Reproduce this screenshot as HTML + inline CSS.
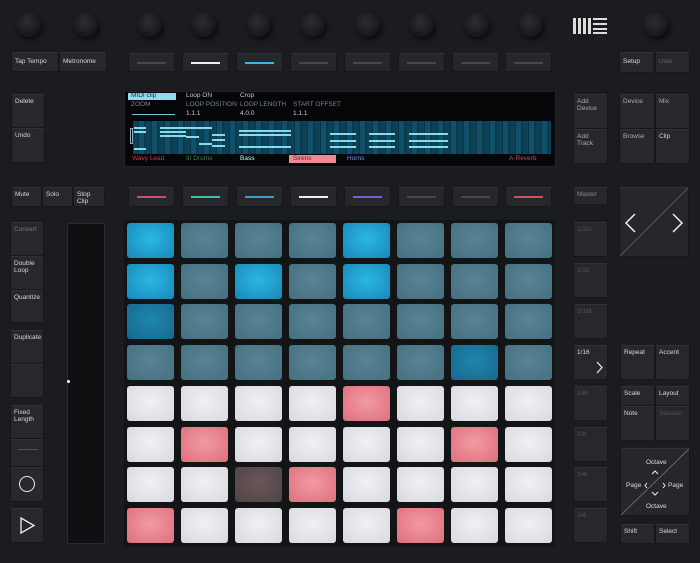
<!DOCTYPE html>
<html><head><meta charset="utf-8"><style>
*{margin:0;padding:0;box-sizing:border-box}
body{width:700px;height:563px;background:#1b1c1f;overflow:hidden;position:relative;font-family:"Liberation Sans",sans-serif}
.a{position:absolute}
.k{position:absolute;width:25px;height:25px;border-radius:50%;background:radial-gradient(circle at 45% 40%,#2c2e31,#161719 70%);box-shadow:2px 3px 4px #0c0c0d}
.b{position:absolute;background:#26282b;border:1px solid #16171a;border-top-color:#303236;border-radius:2px;color:#d8d8d8;font-size:6.5px;padding:3px 3px;line-height:7px}
.t{position:absolute;background:#25272a;border:1px solid #161719;border-top-color:#303236;border-radius:2px}
.t i{position:absolute;left:8px;right:8px;top:50%;height:2px;background:#44474b;margin-top:-1px}
.p{position:absolute;width:47px;height:35px;border-radius:3px}
.S{background:radial-gradient(ellipse at 50% 45%,#5a8395,#44707f)}
.B{background:radial-gradient(ellipse at 50% 45%,#2bb6e4,#1889b8)}
.M{background:radial-gradient(ellipse at 50% 45%,#1f85ad,#17698c)}
.W{background:radial-gradient(ellipse at 50% 45%,#f1f1f4,#d8d8de)}
.P{background:radial-gradient(ellipse at 50% 45%,#f19aa3,#df6f7c)}
.D{background:radial-gradient(ellipse at 50% 45%,#6e5558,#4b4547)}
.n{position:absolute;height:2px;background:#86dcec}
.dt{position:absolute;font-size:6.5px;color:#c5cfd3}
.dim{color:#666}
</style></head><body>
<div class="k" style="left:16px;top:12px"></div>
<div class="k" style="left:73px;top:12px"></div>
<div class="k" style="left:137px;top:12px"></div>
<div class="k" style="left:191px;top:12px"></div>
<div class="k" style="left:246px;top:12px"></div>
<div class="k" style="left:300px;top:12px"></div>
<div class="k" style="left:355px;top:12px"></div>
<div class="k" style="left:409px;top:12px"></div>
<div class="k" style="left:464px;top:12px"></div>
<div class="k" style="left:518px;top:12px"></div>
<div class="k" style="left:643px;top:12px"></div>
<div class="a" style="left:573px;top:18px;width:3px;height:16px;background:#ddd"></div>
<div class="a" style="left:578px;top:18px;width:3px;height:16px;background:#ddd"></div>
<div class="a" style="left:583px;top:18px;width:3px;height:16px;background:#ddd"></div>
<div class="a" style="left:588px;top:18px;width:3px;height:16px;background:#ddd"></div>
<div class="a" style="left:593px;top:18px;width:14px;height:2px;background:#ddd;box-shadow:0 5px 0 #ddd,0 10px 0 #ddd,0 14px 0 #ddd"></div>
<div class="b" style="left:11px;top:52px;width:48px;height:20px;padding-top:5px">Tap Tempo</div>
<div class="b" style="left:59px;top:52px;width:48px;height:20px;padding-top:5px">Metronome</div>
<div class="t" style="left:128px;top:53px;width:47px;height:19px"><i></i></div>
<div class="t" style="left:182px;top:53px;width:47px;height:19px"><i style="background:#eee"></i></div>
<div class="t" style="left:236px;top:53px;width:47px;height:19px"><i style="background:#3ab8dd"></i></div>
<div class="t" style="left:290px;top:53px;width:47px;height:19px"><i></i></div>
<div class="t" style="left:344px;top:53px;width:47px;height:19px"><i></i></div>
<div class="t" style="left:398px;top:53px;width:47px;height:19px"><i></i></div>
<div class="t" style="left:452px;top:53px;width:47px;height:19px"><i></i></div>
<div class="t" style="left:505px;top:53px;width:47px;height:19px"><i></i></div>
<div class="b" style="left:619px;top:52px;width:35px;height:21px;padding-top:5px">Setup</div>
<div class="b dim" style="left:655px;top:52px;width:35px;height:21px;padding-top:5px">User</div>
<div class="b" style="left:11px;top:94px;width:34px;height:34px">Delete</div>
<div class="b" style="left:11px;top:128px;width:34px;height:35px">Undo</div>
<div class="a" style="left:124px;top:91px;width:432px;height:76px;background:#050607;border:1px solid #222"></div>
<div class="a" style="left:128px;top:93px;width:48px;height:7px;background:#8fdcec"></div>
<div class="dt" style="left:131px;top:92px;color:#133">MIDI clip</div>
<div class="dt" style="left:186px;top:92px">Loop ON</div>
<div class="dt" style="left:240px;top:92px">Crop</div>
<div class="dt" style="left:131px;top:101px;color:#7a8489">ZOOM</div>
<div class="dt" style="left:186px;top:101px;color:#7a8489">LOOP POSITION</div>
<div class="dt" style="left:240px;top:101px;color:#7a8489">LOOP LENGTH</div>
<div class="dt" style="left:293px;top:101px;color:#7a8489">START OFFSET</div>
<div class="a" style="left:132px;top:114px;width:43px;height:1px;background:#6ac8de"></div>
<div class="dt" style="left:186px;top:110px">1.1.1</div>
<div class="dt" style="left:240px;top:110px">4.0.0</div>
<div class="dt" style="left:293px;top:110px">1.1.1</div>
<div class="a" style="left:133px;top:121px;width:418px;height:33px;background:repeating-linear-gradient(90deg,#0d4256 0 5px,#0a3548 5px 6px,#10506a 6px 11px,#0b3a4c 11px 13px)"></div>
<div class="a" style="left:130px;top:128px;width:3px;height:16px;border:1px solid #9ab"></div>
<div class="n" style="left:134px;top:127px;width:12px"></div><div class="n" style="left:134px;top:131px;width:12px"></div><div class="n" style="left:134px;top:148px;width:12px"></div>
<div class="n" style="left:160px;top:127px;width:52px"></div><div class="n" style="left:160px;top:131px;width:26px"></div><div class="n" style="left:160px;top:135px;width:26px"></div>
<div class="n" style="left:186px;top:136px;width:13px"></div><div class="n" style="left:199px;top:143px;width:13px"></div>
<div class="n" style="left:212px;top:134px;width:13px"></div><div class="n" style="left:212px;top:139px;width:13px"></div><div class="n" style="left:212px;top:145px;width:13px"></div>
<div class="n" style="left:239px;top:130px;width:52px"></div><div class="n" style="left:239px;top:134px;width:52px"></div><div class="n" style="left:239px;top:146px;width:52px"></div>
<div class="n" style="left:330px;top:133px;width:26px"></div><div class="n" style="left:330px;top:140px;width:26px"></div><div class="n" style="left:330px;top:146px;width:26px"></div>
<div class="n" style="left:369px;top:133px;width:26px"></div><div class="n" style="left:369px;top:140px;width:26px"></div><div class="n" style="left:369px;top:146px;width:26px"></div>
<div class="n" style="left:409px;top:133px;width:39px"></div><div class="n" style="left:409px;top:140px;width:39px"></div><div class="n" style="left:409px;top:146px;width:39px"></div>
<div class="dt" style="left:132px;top:155px;color:#d0344f">Wavy Lead</div>
<div class="dt" style="left:186px;top:155px;color:#4e7a4e">III Drums</div>
<div class="dt" style="left:240px;top:155px;color:#cfe">Bass</div>
<div class="a" style="left:289px;top:155px;width:47px;height:8px;background:#e88b92"></div>
<div class="dt" style="left:293px;top:155px;color:#622">Sirens</div>
<div class="dt" style="left:347px;top:155px;color:#8c8cf0">Horns</div>
<div class="dt" style="left:509px;top:155px;color:#b05060">A-Reverb</div>
<div class="b dim" style="left:573px;top:94px;width:35px;height:35px;color:#aaa">Add Device</div>
<div class="b" style="left:573px;top:129px;width:35px;height:35px;color:#aaa">Add Track</div>
<div class="b" style="left:619px;top:94px;width:36px;height:35px;color:#aaa">Device</div>
<div class="b" style="left:655px;top:94px;width:35px;height:35px;color:#aaa">Mix</div>
<div class="b" style="left:619px;top:129px;width:36px;height:35px;color:#aaa">Browse</div>
<div class="b" style="left:655px;top:129px;width:35px;height:35px">Clip</div>
<div class="b" style="left:11px;top:187px;width:31px;height:20px">Mute</div>
<div class="b" style="left:42px;top:187px;width:31px;height:20px">Solo</div>
<div class="b" style="left:73px;top:187px;width:32px;height:20px">Stop Clip</div>
<div class="t" style="left:128px;top:187px;width:47px;height:20px"><i style="background:#d04a78"></i></div>
<div class="t" style="left:182px;top:187px;width:47px;height:20px"><i style="background:#3ac0b0"></i></div>
<div class="t" style="left:236px;top:187px;width:47px;height:20px"><i style="background:#3aa0d0"></i></div>
<div class="t" style="left:290px;top:187px;width:47px;height:20px"><i style="background:#eee"></i></div>
<div class="t" style="left:344px;top:187px;width:47px;height:20px"><i style="background:#7a5ae0"></i></div>
<div class="t" style="left:398px;top:187px;width:47px;height:20px"><i></i></div>
<div class="t" style="left:452px;top:187px;width:47px;height:20px"><i></i></div>
<div class="t" style="left:505px;top:187px;width:47px;height:20px"><i style="background:#d05060"></i></div>
<div class="b dim" style="left:573px;top:187px;width:35px;height:18px;color:#888">Master</div>
<div class="t" style="left:619px;top:187px;width:70px;height:70px"></div>
<svg class="a" style="left:619px;top:187px" width="70" height="70"><path d="M69 1L1 69" stroke="#555" stroke-width="1"/><path d="M16 27L7 36L16 45M54 27L63 36L54 45" stroke="#eee" stroke-width="1.5" fill="none"/></svg>
<div class="b dim" style="left:10px;top:222px;width:34px;height:34px;color:#777">Convert</div>
<div class="b" style="left:10px;top:256px;width:34px;height:34px">Double Loop</div>
<div class="b" style="left:10px;top:290px;width:34px;height:33px">Quantize</div>
<div class="b" style="left:10px;top:330px;width:34px;height:34px">Duplicate</div>
<div class="b" style="left:10px;top:364px;width:34px;height:34px"></div>
<div class="b" style="left:10px;top:405px;width:34px;height:34px">Fixed Length</div>
<div class="b" style="left:10px;top:439px;width:34px;height:28px"><div style="width:20px;height:1px;background:#a03040;margin:6px 4px"></div></div>
<div class="b" style="left:10px;top:467px;width:34px;height:35px"></div>
<div class="a" style="left:19px;top:476px;width:16px;height:16px;border:1.5px solid #eee;border-radius:50%"></div>
<div class="b" style="left:10px;top:508px;width:34px;height:35px"></div>
<svg class="a" style="left:10px;top:508px" width="34" height="35"><path d="M11 10L24 17.5L11 25Z" stroke="#eee" stroke-width="1.3" fill="none"/></svg>
<div class="a" style="left:67px;top:223px;width:38px;height:321px;background:#0f1011;border:1px solid #2a2b2e;border-radius:2px"></div>
<div class="a" style="left:67px;top:380px;width:3px;height:3px;border-radius:50%;background:#fff"></div>
<div class="a" style="left:124px;top:220px;width:431px;height:326px;background:#131416"></div>
<div class="p B" style="left:127px;top:223px"></div><div class="p S" style="left:181px;top:223px"></div><div class="p S" style="left:235px;top:223px"></div><div class="p S" style="left:289px;top:223px"></div><div class="p B" style="left:343px;top:223px"></div><div class="p S" style="left:397px;top:223px"></div><div class="p S" style="left:451px;top:223px"></div><div class="p S" style="left:505px;top:223px"></div>
<div class="p B" style="left:127px;top:264px"></div><div class="p S" style="left:181px;top:264px"></div><div class="p B" style="left:235px;top:264px"></div><div class="p S" style="left:289px;top:264px"></div><div class="p B" style="left:343px;top:264px"></div><div class="p S" style="left:397px;top:264px"></div><div class="p S" style="left:451px;top:264px"></div><div class="p S" style="left:505px;top:264px"></div>
<div class="p M" style="left:127px;top:304px"></div><div class="p S" style="left:181px;top:304px"></div><div class="p S" style="left:235px;top:304px"></div><div class="p S" style="left:289px;top:304px"></div><div class="p S" style="left:343px;top:304px"></div><div class="p S" style="left:397px;top:304px"></div><div class="p S" style="left:451px;top:304px"></div><div class="p S" style="left:505px;top:304px"></div>
<div class="p S" style="left:127px;top:345px"></div><div class="p S" style="left:181px;top:345px"></div><div class="p S" style="left:235px;top:345px"></div><div class="p S" style="left:289px;top:345px"></div><div class="p S" style="left:343px;top:345px"></div><div class="p S" style="left:397px;top:345px"></div><div class="p M" style="left:451px;top:345px"></div><div class="p S" style="left:505px;top:345px"></div>
<div class="p W" style="left:127px;top:386px"></div><div class="p W" style="left:181px;top:386px"></div><div class="p W" style="left:235px;top:386px"></div><div class="p W" style="left:289px;top:386px"></div><div class="p P" style="left:343px;top:386px"></div><div class="p W" style="left:397px;top:386px"></div><div class="p W" style="left:451px;top:386px"></div><div class="p W" style="left:505px;top:386px"></div>
<div class="p W" style="left:127px;top:427px"></div><div class="p P" style="left:181px;top:427px"></div><div class="p W" style="left:235px;top:427px"></div><div class="p W" style="left:289px;top:427px"></div><div class="p W" style="left:343px;top:427px"></div><div class="p W" style="left:397px;top:427px"></div><div class="p P" style="left:451px;top:427px"></div><div class="p W" style="left:505px;top:427px"></div>
<div class="p W" style="left:127px;top:467px"></div><div class="p W" style="left:181px;top:467px"></div><div class="p D" style="left:235px;top:467px"></div><div class="p P" style="left:289px;top:467px"></div><div class="p W" style="left:343px;top:467px"></div><div class="p W" style="left:397px;top:467px"></div><div class="p W" style="left:451px;top:467px"></div><div class="p W" style="left:505px;top:467px"></div>
<div class="p P" style="left:127px;top:508px"></div><div class="p W" style="left:181px;top:508px"></div><div class="p W" style="left:235px;top:508px"></div><div class="p W" style="left:289px;top:508px"></div><div class="p W" style="left:343px;top:508px"></div><div class="p P" style="left:397px;top:508px"></div><div class="p W" style="left:451px;top:508px"></div><div class="p W" style="left:505px;top:508px"></div>
<div class="b dim" style="left:573px;top:222px;width:35px;height:35px;color:#555">1/32t</div>
<div class="b dim" style="left:573px;top:263px;width:35px;height:35px;color:#555">1/32</div>
<div class="b dim" style="left:573px;top:304px;width:35px;height:35px;color:#555">1/16t</div>
<div class="b" style="left:573px;top:345px;width:35px;height:35px">1/16</div>
<svg class="a" style="left:573px;top:345px" width="35" height="35"><path d="M24 17L29 22.5L24 28" stroke="#eee" stroke-width="1.2" fill="none"/></svg>
<div class="b dim" style="left:573px;top:386px;width:35px;height:35px;color:#555">1/8t</div>
<div class="b dim" style="left:573px;top:427px;width:35px;height:35px;color:#555">1/8</div>
<div class="b dim" style="left:573px;top:467px;width:35px;height:35px;color:#555">1/4t</div>
<div class="b dim" style="left:573px;top:508px;width:35px;height:35px;color:#555">1/4</div>
<div class="b" style="left:620px;top:345px;width:35px;height:35px">Repeat</div>
<div class="b" style="left:655px;top:345px;width:35px;height:35px">Accent</div>
<div class="b" style="left:620px;top:386px;width:35px;height:20px">Scale</div>
<div class="b" style="left:655px;top:386px;width:35px;height:20px">Layout</div>
<div class="b" style="left:620px;top:406px;width:35px;height:35px">Note</div>
<div class="b" style="left:655px;top:406px;width:35px;height:35px;color:#555">Session</div>
<div class="t" style="left:620px;top:448px;width:70px;height:68px"></div>
<svg class="a" style="left:620px;top:448px;font-family:'Liberation Sans',sans-serif" width="70" height="68" font-size="6.5" fill="#ddd"><path d="M69 1L1 67" stroke="#666"/><path d="M32 26L35 23L38 26M32 44L35 47L38 44M27 35L25 37.5L27 40M43 35L45 37.5L43 40" stroke="#eee" stroke-width="1" fill="none"/><text x="26" y="16">Octave</text><text x="26" y="60">Octave</text><text x="6" y="39">Page</text><text x="48" y="39">Page</text></svg>
<div class="b" style="left:620px;top:524px;width:35px;height:20px">Shift</div>
<div class="b" style="left:655px;top:524px;width:35px;height:20px">Select</div>
</body></html>
